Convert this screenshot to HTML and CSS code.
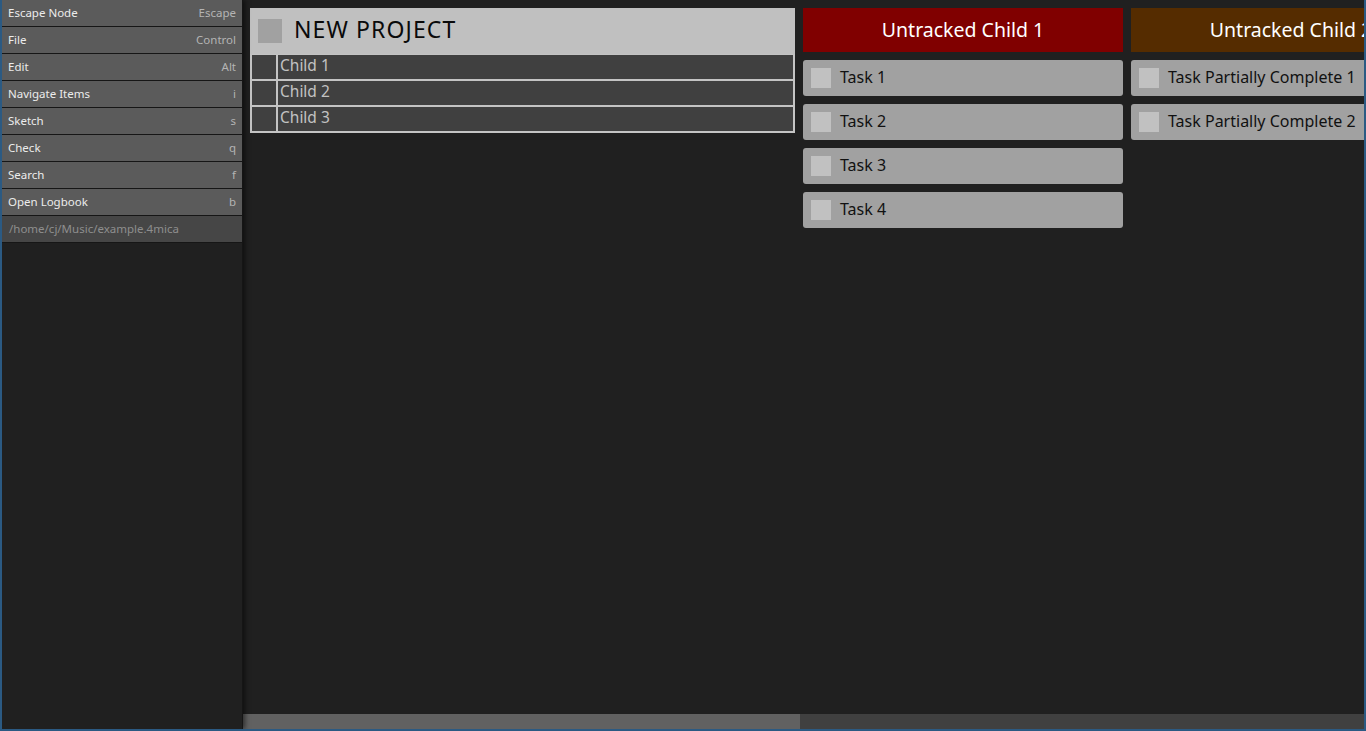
FILE: index.html
```html
<!DOCTYPE html>
<html>
<head>
<meta charset="utf-8">
<link rel="stylesheet" href="styles.css">
</head>
<body>
<div class="app">
  <aside class="sidebar">
    <div class="menu-item"><span class="label">Escape Node</span><span class="key">Escape</span></div>
    <div class="menu-item"><span class="label">File</span><span class="key">Control</span></div>
    <div class="menu-item"><span class="label">Edit</span><span class="key">Alt</span></div>
    <div class="menu-item"><span class="label">Navigate Items</span><span class="key">i</span></div>
    <div class="menu-item"><span class="label">Sketch</span><span class="key">s</span></div>
    <div class="menu-item"><span class="label">Check</span><span class="key">q</span></div>
    <div class="menu-item"><span class="label">Search</span><span class="key">f</span></div>
    <div class="menu-item"><span class="label">Open Logbook</span><span class="key">b</span></div>
    <div class="path-item">/home/cj/Music/example.4mica</div>
  </aside>
  <main class="main">
    <div class="board">
      <section class="project">
        <div class="project-head">
          <span class="project-check"></span>
          <span class="project-title">NEW PROJECT</span>
        </div>
        <div class="child-row"><span class="child-box"></span><span class="child-name">Child 1</span></div>
        <div class="child-row"><span class="child-box"></span><span class="child-name">Child 2</span></div>
        <div class="child-row"><span class="child-box"></span><span class="child-name">Child 3</span></div>
      </section>
      <section class="column">
        <div class="column-head red">Untracked Child 1</div>
        <div class="tasks">
          <div class="task"><span class="task-check"></span><span class="task-name">Task 1</span></div>
          <div class="task"><span class="task-check"></span><span class="task-name">Task 2</span></div>
          <div class="task"><span class="task-check"></span><span class="task-name">Task 3</span></div>
          <div class="task"><span class="task-check"></span><span class="task-name">Task 4</span></div>
        </div>
      </section>
      <section class="column">
        <div class="column-head brown">Untracked Child 2</div>
        <div class="tasks">
          <div class="task"><span class="task-check"></span><span class="task-name">Task Partially Complete 1</span></div>
          <div class="task"><span class="task-check"></span><span class="task-name">Task Partially Complete 2</span></div>
        </div>
      </section>
      <section class="column">
        <div class="column-head gray">Untracked Child 3</div>
      </section>
    </div>
    <div class="hscroll"><div class="hthumb"></div></div>
  </main>
</div>
</body>
</html>
```

FILE: styles.css
```css
* { box-sizing: border-box; }
html, body {
  margin: 0;
  padding: 0;
  background: #2b5a83;
  font-family: "Noto Sans", "DejaVu Sans", sans-serif;
}
.app {
  width: 1366px;
  height: 731px;
  display: flex;
  border-left: 2px solid #2b5a83;
  border-right: 2px solid #2b5a83;
  border-bottom: 2px solid #2b5a83;
  background: #202020;
  overflow: hidden;
}
.sidebar {
  width: 240px;
  flex: 0 0 240px;
  background: #202020;
  display: flex;
  flex-direction: column;
  position: relative;
  z-index: 2;
  box-shadow: 1px 0 0 #151515, 3px 0 5px rgba(0,0,0,0.55);
}
.menu-item {
  height: 27px;
  background: #5b5b5b;
  border-bottom: 1px solid #161616;
  display: flex;
  align-items: center;
  justify-content: space-between;
  padding: 0 6px 1px 6px;
  font-size: 11.5px;
}
.menu-item .label { color: #ececec; }
.menu-item .key { color: #b4b4b4; }
.path-item {
  height: 27px;
  background: #464646;
  border-bottom: 1px solid #161616;
  display: flex;
  align-items: center;
  padding: 0 7px 1px 7px;
  font-size: 11.5px;
  color: #8e8e8e;
}
.main {
  flex: 1;
  min-width: 0;
  display: flex;
  flex-direction: column;
  background: #202020;
}
.board {
  flex: 1;
  display: flex;
  align-items: flex-start;
  gap: 8px;
  padding: 8px;
  overflow: hidden;
}
.project {
  flex: 0 0 545px;
  background: #c4c4c4;
  padding: 0 2px 2px 2px;
  display: flex;
  flex-direction: column;
  gap: 2px;
}
.project-head {
  height: 46px;
  margin: 0 -2px -1px -2px;
  background: #c0c0c0;
  display: flex;
  align-items: center;
  padding-left: 8px;
  gap: 12px;
}
.project-check {
  width: 24px;
  height: 24px;
  background: #a1a1a1;
}
.project-title {
  font-size: 23px;
  line-height: 28px;
  color: #0a0a0a;
  letter-spacing: 1.1px;
  margin-top: -5px;
}
.child-row {
  height: 24px;
  display: flex;
  gap: 2px;
}
.child-box {
  width: 24px;
  background: #404040;
}
.child-name {
  flex: 1;
  background: #404040;
  color: #c2c2c2;
  font-size: 15.5px;
  line-height: 20px;
  padding-left: 2px;
}
.column {
  flex: 0 0 320px;
  display: flex;
  flex-direction: column;
}
.column-head {
  height: 44px;
  display: flex;
  align-items: center;
  justify-content: center;
  color: #ffffff;
  font-size: 19.5px;
  padding-bottom: 2px;
}
.column-head.red { background: #800000; }
.column-head.brown { background: #552c00; }
.column-head.gray { background: #555555; }
.tasks {
  margin-top: 8px;
  display: flex;
  flex-direction: column;
  gap: 8px;
}
.task {
  height: 36px;
  background: #a1a1a1;
  border-radius: 3px;
  display: flex;
  align-items: center;
  padding-left: 8px;
  gap: 9px;
}
.task-check {
  width: 20px;
  height: 20px;
  background: #c1c1c1;
}
.task-name {
  font-size: 16px;
  color: #111111;
  margin-top: -2px;
}
.hscroll {
  height: 15px;
  flex: 0 0 15px;
  background: #404040;
}
.hthumb {
  width: 558px;
  height: 100%;
  background: #616161;
}
```
